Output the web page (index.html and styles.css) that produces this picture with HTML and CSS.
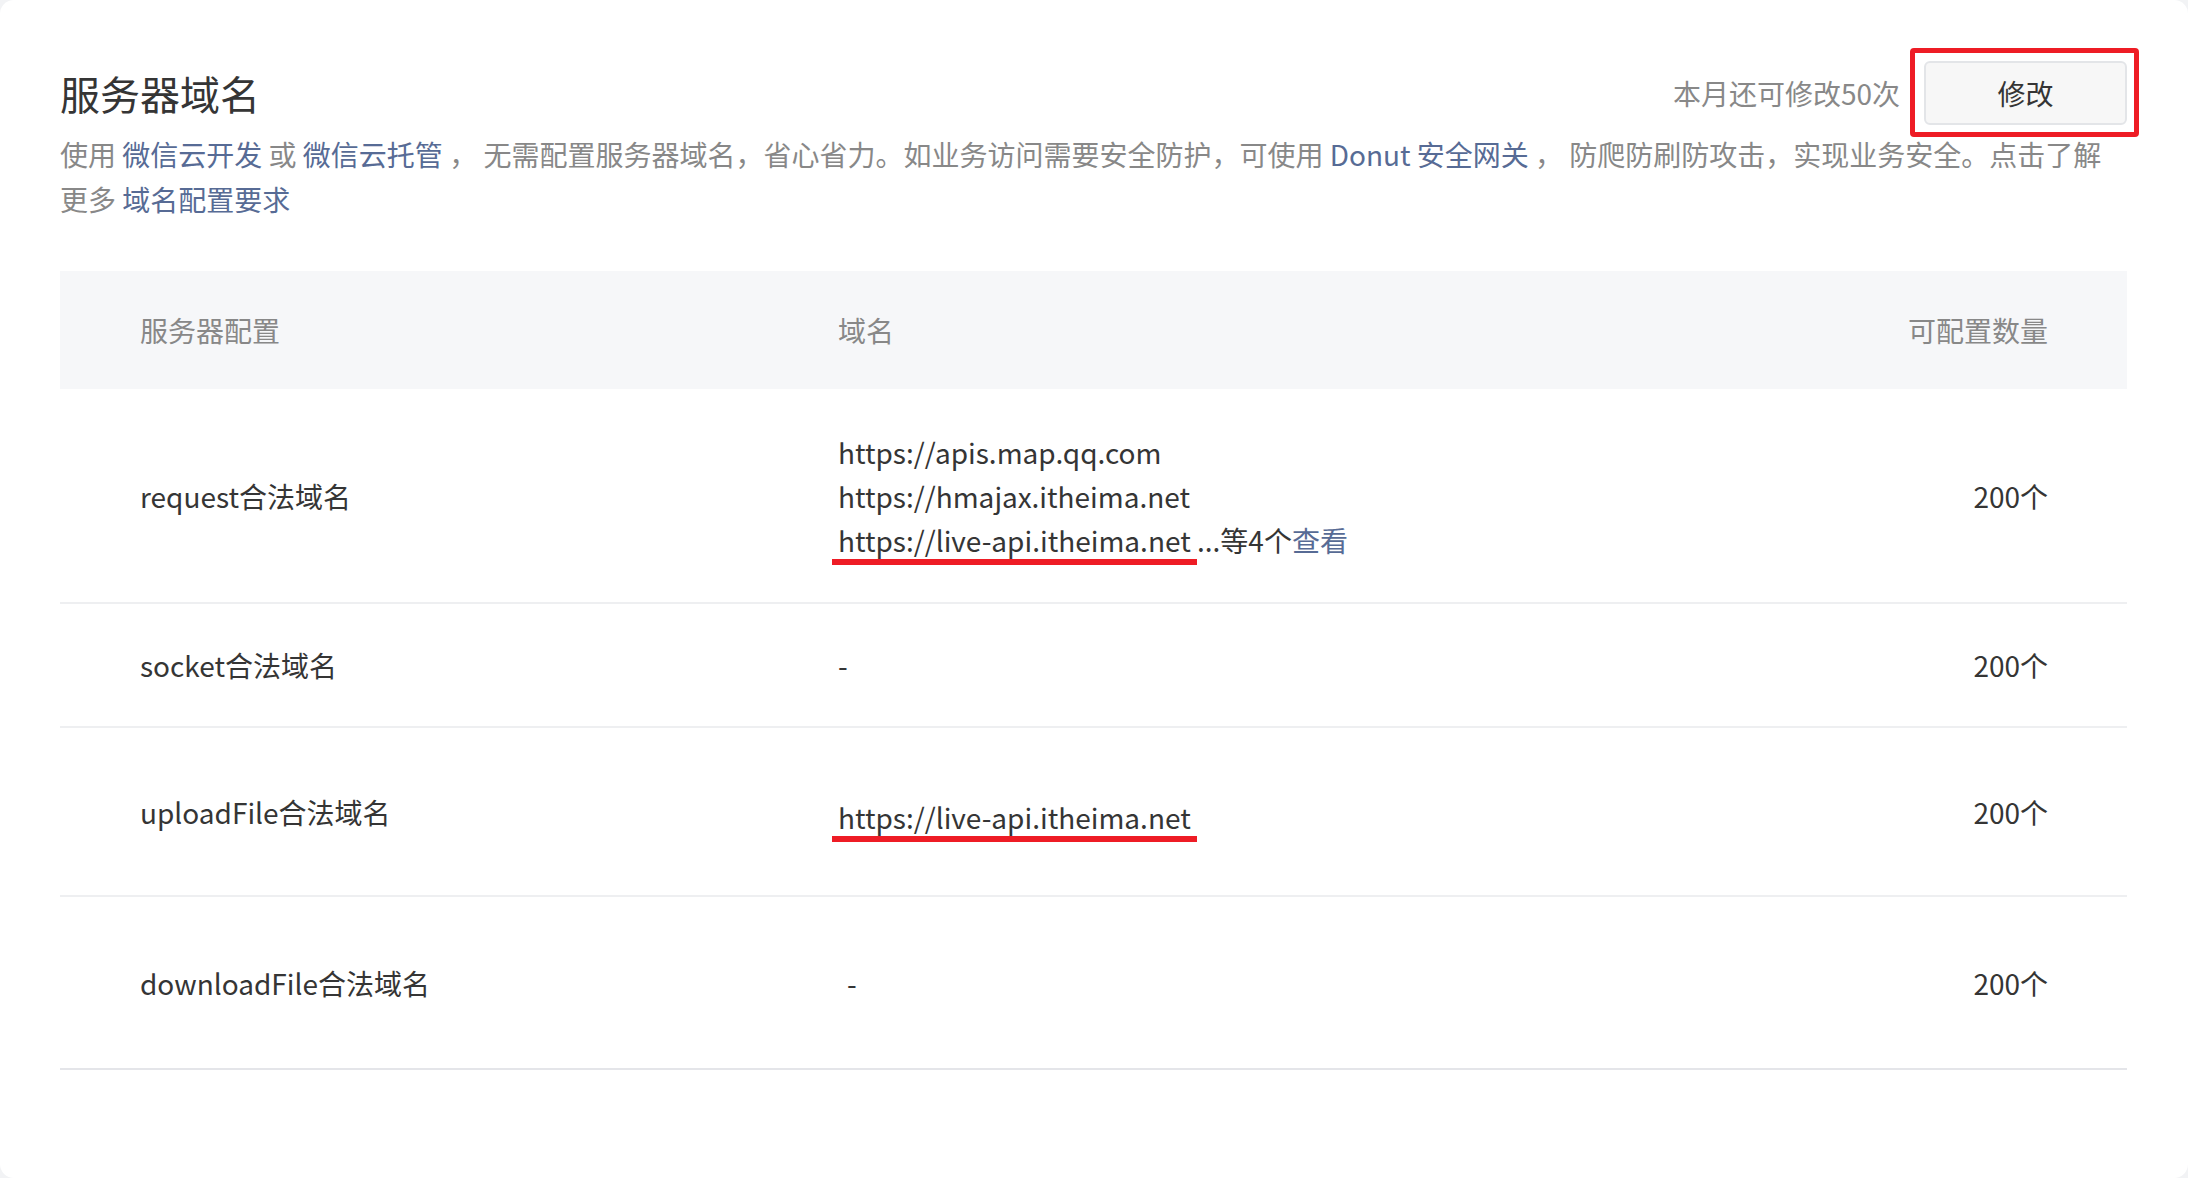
FILE: index.html
```html
<!DOCTYPE html>
<html lang="zh-CN">
<head>
<meta charset="utf-8">
<title>服务器域名</title>
<link rel="stylesheet" href="styles.css">
</head>
<body>
<div class="card">
  <div class="head">
    <h2 class="title">服务器域名</h2>
    <div class="head-right">
      <span class="quota">本月还可修改50次</span>
      <span class="btn-mark"><button class="btn">修改</button></span>
    </div>
  </div>
  <p class="desc">使用 <a class="link">微信云开发</a> 或 <a class="link">微信云托管</a> ，  无需配置服务器域名，省心省力。如业务访问需要安全防护，可使用 <a class="link">Donut 安全网关</a> ，  防爬防刷防攻击，实现业务安全。点击了解<br>更多 <a class="link">域名配置要求</a></p>

  <table class="tbl">
    <colgroup>
      <col class="c1"><col class="c2"><col class="c3">
    </colgroup>
    <thead>
      <tr class="th-row">
        <th>服务器配置</th>
        <th>域名</th>
        <th class="right">可配置数量</th>
      </tr>
    </thead>
    <tbody>
      <tr class="r1">
        <td>request合法域名</td>
        <td>
          <div>https://apis.map.qq.com</div>
          <div>https://hmajax.itheima.net</div>
          <div><span class="mark">https://live-api.itheima.net</span> ...等4个<a class="link">查看</a></div>
        </td>
        <td class="right">200个</td>
      </tr>
      <tr class="r2">
        <td>socket合法域名</td>
        <td>-</td>
        <td class="right">200个</td>
      </tr>
      <tr class="r3">
        <td>uploadFile合法域名</td>
        <td><div class="shift"><span class="mark">https://live-api.itheima.net</span></div></td>
        <td class="right">200个</td>
      </tr>
      <tr class="r4 last">
        <td>downloadFile合法域名</td>
        <td><span class="dash-off">-</span></td>
        <td class="right">200个</td>
      </tr>
    </tbody>
  </table>
</div>
</body>
</html>
```

FILE: styles.css
```css
html, body {
  margin: 0;
  padding: 0;
}
body {
  background: #f2f3f5;
  font-family: "Noto Sans CJK SC", "Noto Sans", sans-serif;
  color: #353535;
}
.card {
  box-sizing: border-box;
  min-height: 1178px;
  background: #fff;
  border-radius: 14px;
  padding: 61px 61px 0 60px;
}
.head {
  display: flex;
  align-items: center;
  justify-content: space-between;
  height: 64px;
}
.title {
  margin: 0;
  font-size: 40px;
  font-weight: 400;
  line-height: 56px;
  color: #353535;
}
.head-right {
  display: flex;
  align-items: center;
}
.quota {
  font-size: 28px;
  color: #888;
  margin-right: 24px;
}
.btn-mark {
  position: relative;
  display: flex;
}
.btn-mark::after {
  content: "";
  position: absolute;
  left: -14px;
  top: -13px;
  right: -12px;
  bottom: -12px;
  border: 5px solid #ee1c25;
  border-radius: 4px;
  pointer-events: none;
}
.btn {
  box-sizing: border-box;
  width: 203px;
  height: 64px;
  background: #f7f7f7;
  border: 2px solid #e3e5e8;
  border-radius: 6px;
  font-family: inherit;
  font-size: 28px;
  color: #353535;
  padding: 0;
}
.desc {
  margin: 7px 0 0;
  font-size: 28px;
  line-height: 45px;
  color: #888;
}
.link {
  color: #576b95;
  text-decoration: none;
}
.tbl {
  margin-top: 49px;
  width: 100%;
  border-collapse: collapse;
  table-layout: fixed;
  font-size: 28px;
  line-height: 44px;
}
.c1 { width: 698px; }
.c3 { width: 400px; }
.tbl th, .tbl td {
  padding: 0 80px;
  text-align: left;
  vertical-align: middle;
  font-weight: 400;
}
.tbl .right { text-align: right; padding-right: 79px; }
.th-row {
  height: 118px;
  background: #f6f7f9;
}
.th-row th { color: #888; }
.tbl td { color: #353535; }
.tbl tbody tr { border-bottom: 2px solid #eeeff1; }
.tbl tbody tr.last { border-bottom-color: #e4e5e9; }
.r1 { height: 214px; }
.r2 { height: 124px; }
.r3 { height: 169px; }
.r4 { height: 173px; }
.mark {
  position: relative;
}
.mark::after {
  content: "";
  position: absolute;
  left: -6px;
  right: -6px;
  bottom: -5px;
  height: 6px;
  background: #ee1c25;
}
.shift { padding-top: 10px; }
.dash-off { padding-left: 9px; }
```
